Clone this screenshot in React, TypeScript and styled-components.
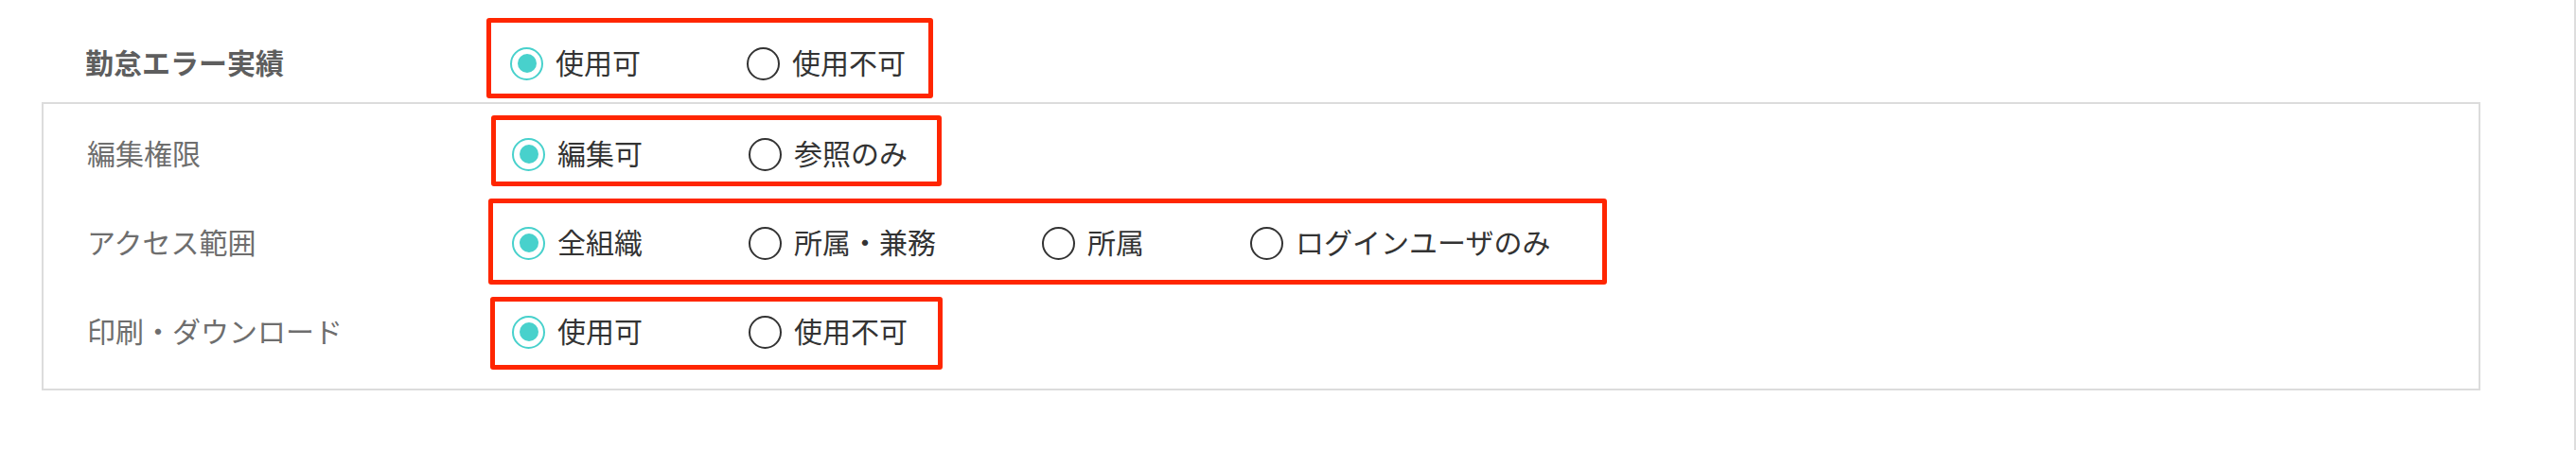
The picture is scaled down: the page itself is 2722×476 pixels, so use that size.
import React from "react";
import styled, { createGlobalStyle } from "styled-components";

const GlobalStyle = createGlobalStyle`
  html, body {
    margin: 0;
    padding: 0;
    background: #fff;
  }
  body {
    font-family: "Noto Sans CJK JP", "Noto Sans", sans-serif;
  }
`;

const Page = styled.div`
  box-sizing: border-box;
  width: 2722px;
  min-height: 476px;
  padding: 26px 0 0 44px;
  border-right: 2px solid #dddddd;
`;

const TopRow = styled.div`
  display: flex;
  align-items: center;
  height: 82px;
  padding-left: 46px;
`;

const Panel = styled.div`
  box-sizing: border-box;
  width: 2577px;
  border: 2px solid #dcdcdc;
  padding: 6px 0 13px 0;
`;

const Row = styled.div`
  display: flex;
  align-items: center;
  height: 94px;
  padding-left: 46px;
`;

const Label = styled.div<{ $bold?: boolean }>`
  width: 449px;
  flex: 0 0 auto;
  font-size: 30px;
  line-height: 30px;
  padding-bottom: 5px;
  color: ${(p) => (p.$bold ? "#5e5e5e" : "#6e6e6e")};
  font-weight: ${(p) => (p.$bold ? 700 : 400)};
`;

const Group = styled.div`
  position: relative;
  display: flex;
  align-items: center;
  gap: 112px;
  height: 35px;
`;

// red annotation box drawn over the group
const Highlight = styled.div<{ $x: number; $y: number; $w: number; $h: number }>`
  position: absolute;
  left: ${(p) => p.$x}px;
  top: ${(p) => p.$y}px;
  width: ${(p) => p.$w}px;
  height: ${(p) => p.$h}px;
  box-sizing: border-box;
  border: 5px solid #ff2600;
  border-radius: 3px;
  pointer-events: none;
`;

const Option = styled.label`
  display: flex;
  align-items: center;
  gap: 13px;
  cursor: pointer;
`;

const Circle = styled.span<{ $on?: boolean }>`
  position: relative;
  box-sizing: border-box;
  width: 35px;
  height: 35px;
  border-radius: 50%;
  border: 2px solid ${(p) => (p.$on ? "#48d1cc" : "#333333")};
  &::after {
    content: "";
    display: ${(p) => (p.$on ? "block" : "none")};
    position: absolute;
    left: 50%;
    top: 50%;
    width: 20px;
    height: 20px;
    margin: -10px 0 0 -10px;
    border-radius: 50%;
    background: #48d1cc;
  }
`;

const OptionText = styled.span`
  font-size: 30px;
  line-height: 30px;
  padding-bottom: 5px;
  color: #333333;
`;

interface box {
  x: number;
  y: number;
  w: number;
  h: number;
}

interface setting {
  label: string;
  options: string[];
  box: box;
}

function Radios({ options, box }: { options: string[]; box: box }) {
  return (
    <Group>
      {options.map((o, i) => (
        <Option key={o}>
          <Circle $on={i === 0} />
          <OptionText>{o}</OptionText>
        </Option>
      ))}
      <Highlight $x={box.x} $y={box.y} $w={box.w} $h={box.h} />
    </Group>
  );
}

const top: setting = {
  label: "勤怠エラー実績",
  options: ["使用可", "使用不可"],
  box: { x: -25, y: -31, w: 472, h: 85 },
};

const rows: setting[] = [
  {
    label: "編集権限",
    options: ["編集可", "参照のみ"],
    box: { x: -22, y: -24, w: 476, h: 75 },
  },
  {
    label: "アクセス範囲",
    options: ["全組織", "所属・兼務", "所属", "ログインユーザのみ"],
    box: { x: -25, y: -30, w: 1182, h: 91 },
  },
  {
    label: "印刷・ダウンロード",
    options: ["使用可", "使用不可"],
    box: { x: -23, y: -20, w: 478, h: 77 },
  },
];

export default function App() {
  return (
    <>
      <GlobalStyle />
      <Page>
        <TopRow>
          <Label $bold>{top.label}</Label>
          <Radios options={top.options} box={top.box} />
        </TopRow>
        <Panel>
          {rows.map((r) => (
            <Row key={r.label}>
              <Label>{r.label}</Label>
              <Radios options={r.options} box={r.box} />
            </Row>
          ))}
        </Panel>
      </Page>
    </>
  );
}
